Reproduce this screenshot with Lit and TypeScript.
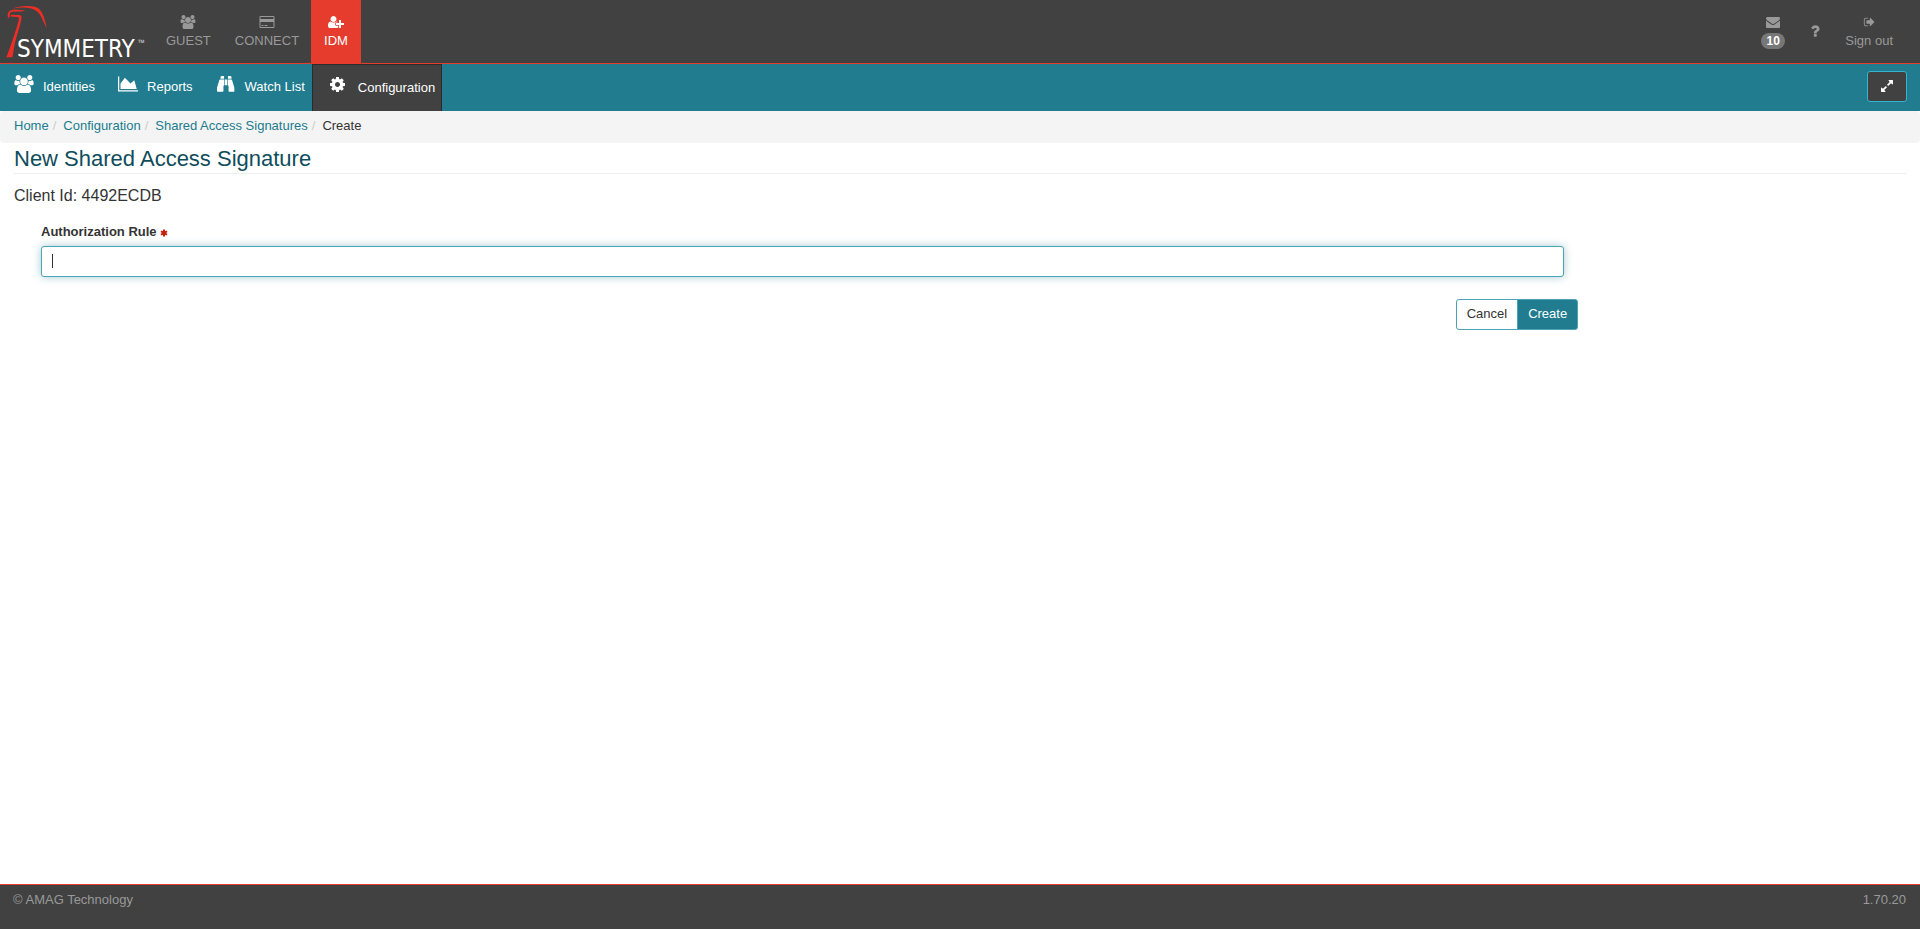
import { LitElement, html, css, svg } from "lit";
import { customElement, property } from "lit/decorators.js";

const glyphs: Record<string, { box: string; path: string }> = {
  users: {
    box: "64 0 1920 1792",
    path: "M657 896q-162 5-265 128h-134q-82 0-138-40.5t-56-118.5q0-353 124-353 6 0 43.5 21t97.5 42.5 119 21.5q67 0 133-23-5 37-5 66 0 139 81 256zm1071 637q0 120-73 189.5t-194 69.5h-874q-121 0-194-69.5t-73-189.5q0-53 3.5-103.5t14-109 26.5-108.5 43-97.5 62-81 85.5-53.5 111.5-20q10 0 43 21.5t73 48 107 48 135 21.5 135-21.5 107-48 73-48 43-21.5q61 0 111.5 20t85.5 53.5 62 81 43 97.5 26.5 108.5 14 109 3.5 103.5zm-1024-1277q0 106-75 181t-181 75-181-75-75-181 75-181 181-75 181 75 75 181zm704 384q0 159-112.5 271.5t-271.5 112.5-271.5-112.5-112.5-271.5 112.5-271.5 271.5-112.5 271.5 112.5 112.5 271.5zm576 225q0 78-56 118.5t-138 40.5h-134q-103-123-265-128 81-117 81-256 0-29-5-66 66 23 133 23 59 0 119-21.5t97.5-42.5 43.5-21q124 0 124 353zm-128-609q0 106-75 181t-181 75-181-75-75-181 75-181 181-75 181 75 75 181z",
  },
  card: {
    box: "0 0 1920 1792",
    path: "M1760 128q66 0 113 47t47 113v1216q0 66-47 113t-113 47h-1600q-66 0-113-47t-47-113v-1216q0-66 47-113t113-47h1600zm-1600 128q-13 0-22.5 9.5t-9.5 22.5v224h1664v-224q0-13-9.5-22.5t-22.5-9.5h-1600zm1600 1280q13 0 22.5-9.5t9.5-22.5v-608h-1664v608q0 13 9.5 22.5t22.5 9.5h1600zm-1504-128v-128h256v128h-256zm384 0v-128h384v128h-384z",
  },
  userPlus: {
    box: "0 0 2048 1792",
    path: "M704 896q-159 0-271.5-112.5t-112.5-271.5 112.5-271.5 271.5-112.5 271.5 112.5 112.5 271.5-112.5 271.5-271.5 112.5zm960 128h352q13 0 22.5 9.5t9.5 22.5v192q0 13-9.5 22.5t-22.5 9.5h-352v352q0 13-9.5 22.5t-22.5 9.5h-192q-13 0-22.5-9.5t-9.5-22.5v-352h-352q-13 0-22.5-9.5t-9.5-22.5v-192q0-13 9.5-22.5t22.5-9.5h352v-352q0-13 9.5-22.5t22.5-9.5h192q13 0 22.5 9.5t9.5 22.5v352zm-736 224q0 52 38 90t90 38h256v238q-68 50-171 50h-874q-121 0-194-69t-73-190q0-53 3.5-103.5t14-109 26.5-108.5 43-97.5 62-81 85.5-53.5 111.5-20q19 0 39 17 79 61 154.5 91.5t164.5 30.5 164.5-30.5 154.5-91.5q20-17 39-17 132 0 217 96h-223q-52 0-90 38t-38 90v192z",
  },
  envelope: {
    box: "0 0 1792 1792",
    path: "M1792 710v794q0 66-47 113t-113 47h-1472q-66 0-113-47t-47-113v-794q44 49 101 87 362 246 497 345 57 42 92.5 65.5t94.5 48 110 24.5h2q51 0 110-24.5t94.5-48 92.5-65.5q170-123 498-345 57-39 100-87zm0-294q0 79-49 151t-122 123q-376 261-468 325-10 7-42.5 31t-54 38.5-52 32.5-57.5 27-50 9h-2q-23 0-50-9t-57.5-27-52-32.5-54-38.5-42.5-31q-91-64-262-182.5t-205-142.5q-62-42-117-115.5t-55-136.5q0-78 41.5-130t118.5-52h1472q65 0 112.5 47t47.5 113z",
  },
  question: {
    box: "0 0 1792 1792",
    path: "M1088 1256v240q0 16-12 28t-28 12h-240q-16 0-28-12t-12-28v-240q0-16 12-28t28-12h240q16 0 28 12t12 28zm316-600q0 54-15.5 101t-35 76.5-55 59.5-57.5 43.5-61 35.5q-41 23-68.5 65t-27.5 67q0 17-12 32.5t-28 15.5h-240q-15 0-25.5-18.5t-10.5-37.5v-45q0-83 65-156.5t143-108.5q59-27 84-56t25-76q0-42-46.5-74t-107.5-32q-65 0-108 29-35 25-107 115-13 16-31 16-12 0-25-8l-164-125q-13-10-15.5-25t5.5-28q160-266 464-266 80 0 161 31t146 83 106 127.5 41 158.5z",
  },
  signOut: {
    box: "0 0 1664 1792",
    path: "M704 1440q0 4 1 20t.5 26.5-3 23.5-10 19.5-20.5 6.5h-320q-119 0-203.5-84.5t-84.5-203.5v-704q0-119 84.5-203.5t203.5-84.5h320q13 0 22.5 9.5t9.5 22.5q0 4 1 20t.5 26.5-3 23.5-10 19.5-20.5 6.5h-320q-66 0-113 47t-47 113v704q0 66 47 113t113 47h312l11.5 1 11.5 3 8 5.5 7 9 2 13.5zm928-544q0 26-19 45l-544 544q-19 19-45 19t-45-19-19-45v-288h-448q-26 0-45-19t-19-45v-384q0-26 19-45t45-19h448v-288q0-26 19-45t45-19 45 19l544 544q19 19 19 45z",
  },
  chart: {
    box: "0 0 2048 1792",
    path: "M2048 1536v128h-2048v-1536h128v1408h1920zm-384-1024l256 896h-1664v-576l448-576 576 576z",
  },
  binoculars: {
    box: "0 0 1792 1792",
    path: "M704 448v576l-64 64v512q0 26-19 45t-45 19h-512q-26 0-45-19t-19-45v-320q0-20 6-36l226-738q14-58 64-58zm384 0h344q50 0 64 58l226 738q6 16 6 36v320q0 26-19 45t-45 19h-448q-26 0-45-19t-19-45v-512l-64-64zm-320 0h256v576h-256zM704 96v288h-352v-192q0-26 19-45t45-19h32v-32zm640 0v32h32q26 0 45 19t19 45v192h-352v-288z",
  },
  cog: {
    box: "128 128 1536 1536",
    path: "M1152 896q0-106-75-181t-181-75-181 75-75 181 75 181 181 75 181-75 75-181zm512-109v222q0 12-8 23t-20 13l-185 28q-19 54-39 91 35 50 107 138 10 12 10 25t-9 23q-27 37-99 108t-94 71q-12 0-26-9l-138-108q-44 23-91 38-16 136-29 186-7 28-36 28h-222q-14 0-24.5-8.5t-11.5-21.5l-28-184q-49-16-90-37l-141 107q-10 9-25 9-14 0-25-11-126-114-165-168-7-10-7-23 0-12 8-23 15-21 51-66.5t54-70.5q-27-50-41-99l-183-27q-13-2-21-12.5t-8-23.5v-222q0-12 8-23t19-13l186-28q14-46 39-92-40-57-107-138-10-12-10-24 0-10 9-23 26-36 98.5-107.5t94.5-71.5q13 0 26 10l138 107q44-23 91-38 16-136 29-186 7-28 36-28h222q14 0 24.5 8.5t11.5 21.5l28 184q49 16 90 37l142-107q9-9 24-9 13 0 25 10 129 119 165 170 7 8 7 22 0 12-8 23-15 21-51 66.5t-54 70.5q26 50 41 98l183 28q13 2 21 12.5t8 23.5z",
  },
  expand: {
    box: "128 128 1536 1536",
    path: "M883 1056q0 13-10 23l-332 332 144 144q19 19 19 45t-19 45-45 19h-448q-26 0-45-19t-19-45v-448q0-26 19-45t45-19 45 19l144 144 332-332q10-10 23-10t23 10l114 114q10 10 10 23zm781-864v448q0 26-19 45t-45 19-45-19l-144-144-332 332q-10 10-23 10t-23-10l-114-114q-10-10-10-23t10-23l332-332-144-144q-19-19-19-45t19-45 45-19h448q26 0 45 19t19 45z",
  },
  asterisk: {
    box: "0 0 16 16",
    path: "M6 1h4v3.600l3.100-1.800 2 3.400L12 8l3.100 1.800-2 3.400L10 11.400V15H6v-3.600l-3.100 1.800-2-3.400L4 8 .9 6.200l2-3.400L6 4.600z",
  },
};

@customElement("app-icon")
export class AppIcon extends LitElement {
  @property() name = "";

  static styles = css`
    :host { display: block; }
    .glyph { display: block; width: 100%; height: 100%; fill: currentColor; }
  `;

  render() {
    const g = glyphs[this.name];
    return html`<svg class="glyph" viewBox=${g.box} aria-hidden="true">${svg`<path d=${g.path}></path>`}</svg>`;
  }
}

@customElement("app-root")
export class AppRoot extends LitElement {
  static styles = css`
    :host {
      display: flex;
      flex-direction: column;
      min-height: 100vh;
      background: #fff;
      color: #333;
      font: 13px/18px "Liberation Sans", Arial, sans-serif;
    }
    * { box-sizing: border-box; }
    a { color: inherit; text-decoration: none; }

    .topbar {
      display: flex;
      height: 64px;
      background: #414141;
      border-bottom: 1px solid #e63c2d;
      color: #999;
    }
    .brand { width: 154px; }
    .logo { display: block; width: 152px; height: 63px; }
    .wordmark { font-family: "DejaVu Sans Condensed", "Open Sans", sans-serif; font-size: 24px; fill: #fff; }
    .mark { font-family: "Open Sans", sans-serif; font-size: 9px; fill: #ccc; }
    .eagle { fill: #ee2e24; }
    .modules, .account { display: flex; }
    .account { margin-left: auto; padding-right: 15px; }
    .tab {
      display: flex;
      flex-direction: column;
      align-items: center;
      gap: 3px;
      padding: 15px 12px 0;
    }
    .tab.current { padding: 15px 13px 0; background: #e63c2d; color: #fff; }
    .tab-icon { width: 16px; height: 14px; }
    .tab-icon.small { height: 12px; margin: 1px 0; }
    .badge {
      min-width: 24px;
      height: 16px;
      margin-top: 1px;
      border-radius: 8px;
      background: #777;
      color: #fff;
      font-size: 12px;
      font-weight: bold;
      line-height: 16px;
      text-align: center;
    }
    .tab.help { justify-content: center; padding: 0 10px 1px; }
    .help-icon { width: 16px; height: 16px; }

    .menubar {
      display: flex;
      align-items: stretch;
      height: 47px;
      padding: 0 13px 0 14px;
      background: #207c8e;
      color: #fff;
    }
    .menu { display: flex; gap: 23px; }
    .entry { display: flex; gap: 9px; padding-top: 11px; }
    .entry-icon { width: 20px; height: 18px; }
    .entry-text { padding-top: 3px; }
    .config {
      display: flex;
      gap: 13px;
      margin-left: 7px;
      padding: 11px 6px 0 17px;
      border: 1px solid #2b2b2b;
      border-bottom: 0;
      background: #414141;
    }
    .cog { width: 15px; height: 17px; }
    .expand {
      display: grid;
      place-items: center;
      width: 40px;
      height: 31px;
      margin: 7px 0 0 auto;
      padding: 0 0 2px;
      border: 1px solid #35b5cf;
      border-radius: 3px;
      background: #414141;
      color: #fff;
    }
    .expand-icon { width: 12px; height: 12px; }

    .trail {
      display: flex;
      margin: 0;
      padding: 6px 14px 8px;
      list-style: none;
      border-radius: 4px;
      background: #f4f4f4;
    }
    .crumb { color: #207c8e; }
    .crumb + .crumb::before { content: "/"; padding: 0 7px 0 4px; color: #ccc; }
    .crumb.here { color: #333; }

    .content { flex: 1; padding: 0 14px; }
    .title {
      margin: 0;
      padding: 2px 0 1px;
      border-bottom: 1px solid #eee;
      color: #0f4d5c;
      font-size: 22px;
      font-weight: normal;
      line-height: 27px;
    }
    .client { margin: 12px 0 17px; font-size: 16px; font-weight: normal; line-height: 20px; }
    .form-area { padding-right: 15px; }
    .form { width: calc(100% * 10 / 12); }
    .field { padding: 0 14px 0 27px; }
    .label { display: flex; align-items: center; gap: 3px; font-weight: bold; }
    .required { width: 8px; height: 8px; margin-top: 2px; color: #c4200f; }
    .box { position: relative; margin-top: 5px; }
    .input {
      display: block;
      width: 100%;
      height: 31px;
      padding: 6px 10px;
      border: 1px solid #4ba3b3;
      border-radius: 3px;
      outline: 0;
      box-shadow: 0 0 8px rgba(32, 124, 142, 0.4);
      caret-color: transparent;
      color: #333;
      font: inherit;
    }
    .caret { position: absolute; top: 8px; left: 11px; width: 1px; height: 14px; background: #333; }
    .actions { display: flex; justify-content: flex-end; margin-top: 22px; }
    .button {
      height: 31px;
      padding: 0 10px 2px;
      border: 1px solid #4ba3b3;
      border-radius: 3px 0 0 3px;
      background: #fff;
      color: #333;
      font: inherit;
    }
    .button.primary { margin-left: -1px; border-radius: 0 3px 3px 0; background: #207c8e; color: #fff; }

    .footer {
      display: flex;
      justify-content: space-between;
      height: 45px;
      padding: 6px 14px 0 13px;
      border-top: 1px solid #e63c2d;
      background: #414141;
      color: #999;
    }
  `;

  render() {
    return html`
      <header class="topbar">
        <a class="brand" href="#" aria-label="Symmetry">
          <svg class="logo" viewBox="0 0 152 63">
            <path class="eagle" d="M8 18C7 12 9 10 15 9.500L25 10.500C23 11.500 21 11.600 18 11.400L12 11.800C10 12 9.500 14 9.800 17z"></path>
            <path class="eagle" d="M11 14.800L19 15Q22 15.300 21.500 18C21 22 19 29 16.500 37C14.500 44 13.500 50 12.500 57L6.300 57.500C10 48 13 39 15.500 31C17 26 18.500 22 19 19Q19.500 17.200 17.500 17L10.500 16.400z"></path>
            <path class="eagle" d="M13 8.500C19 5.500 33 5 38.500 8.500C43 12 45 20 46.800 28C43 22 41.500 14.500 36.500 11C31 7 21 7 13 8.500z"></path>
            <text class="wordmark" x="17" y="57">SYMMETRY</text>
            <text class="mark" x="138" y="46">™</text>
          </svg>
        </a>
        <nav class="modules" aria-label="Modules">
          <a class="tab" href="#"><app-icon class="tab-icon" name="users"></app-icon>GUEST</a>
          <a class="tab" href="#"><app-icon class="tab-icon" name="card"></app-icon>CONNECT</a>
          <a class="tab current" href="#"><app-icon class="tab-icon" name="userPlus"></app-icon>IDM</a>
        </nav>
        <nav class="account" aria-label="Account">
          <a class="tab" href="#" aria-label="Messages">
            <app-icon class="tab-icon" name="envelope"></app-icon>
            <span class="badge">10</span>
          </a>
          <a class="tab help" href="#" aria-label="Help"><app-icon class="help-icon" name="question"></app-icon></a>
          <a class="tab" href="#"><app-icon class="tab-icon small" name="signOut"></app-icon>Sign out</a>
        </nav>
      </header>

      <div class="menubar">
        <nav class="menu" aria-label="Main">
          <a class="entry" href="#"><app-icon class="entry-icon" name="users"></app-icon><span class="entry-text">Identities</span></a>
          <a class="entry" href="#"><app-icon class="entry-icon" name="chart"></app-icon><span class="entry-text">Reports</span></a>
          <a class="entry" href="#"><app-icon class="entry-icon" name="binoculars"></app-icon><span class="entry-text">Watch List</span></a>
        </nav>
        <a class="config" href="#"><app-icon class="cog" name="cog"></app-icon><span class="entry-text">Configuration</span></a>
        <button class="expand" type="button" aria-label="Full screen"><app-icon class="expand-icon" name="expand"></app-icon></button>
      </div>

      <ol class="trail">
        <li class="crumb"><a href="#">Home</a></li>
        <li class="crumb"><a href="#">Configuration</a></li>
        <li class="crumb"><a href="#">Shared Access Signatures</a></li>
        <li class="crumb here">Create</li>
      </ol>

      <main class="content">
        <h2 class="title">New Shared Access Signature</h2>
        <h4 class="client">Client Id: 4492ECDB</h4>
        <div class="form-area">
          <form class="form" @submit=${(e: Event) => e.preventDefault()}>
            <div class="field">
              <label class="label" for="rule">Authorization Rule<app-icon class="required" name="asterisk"></app-icon></label>
              <div class="box">
                <input class="input" id="rule" type="text" required />
                <span class="caret"></span>
              </div>
            </div>
            <div class="actions">
              <button class="button" type="button">Cancel</button>
              <button class="button primary" type="submit">Create</button>
            </div>
          </form>
        </div>
      </main>

      <footer class="footer"><span>© AMAG Technology</span><span>1.70.20</span></footer>
    `;
  }
}
